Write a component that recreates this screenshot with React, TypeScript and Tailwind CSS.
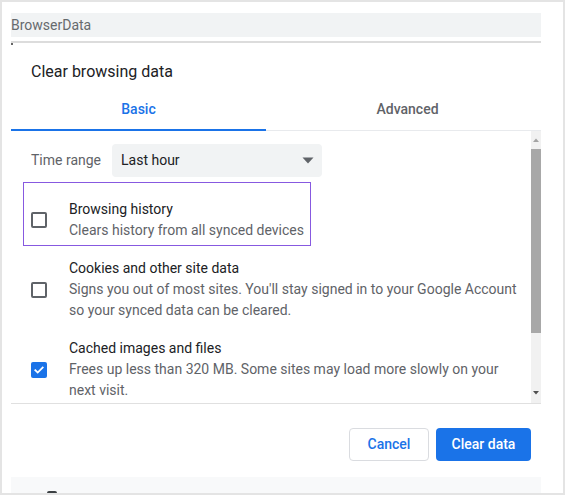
import React from 'react'

const ITEMS = [
  {
    title: 'Cookies and other site data',
    body: "Signs you out of most sites. You'll stay signed in to your Google Account so your synced data can be cleared.",
    checked: false,
    gap: 'mt-[12px]',
  },
  {
    title: 'Cached images and files',
    body: 'Frees up less than 320 MB. Some sites may load more slowly on your next visit.',
    checked: true,
    gap: 'mt-[17px]',
  },
]

function Checkbox({ checked }: { checked: boolean }) {
  if (checked) {
    return (
      <span className="flex h-[16px] w-[16px] shrink-0 items-center justify-center rounded-[2px] bg-[#1a73e8]">
        <svg width="12" height="12" viewBox="0 0 12 12" fill="none">
          <path d="M2.3 6.2l2.4 2.4 5-5" stroke="white" strokeWidth="1.8" strokeLinecap="square" />
        </svg>
      </span>
    )
  }
  return <span className="block h-[16px] w-[16px] shrink-0 rounded-[2px] border-2 border-[#5f6368]" />
}

function Row({ title, body, checked }: { title: string; body: string; checked: boolean }) {
  return (
    <div className="flex items-center gap-[22px]">
      <Checkbox checked={checked} />
      <div className="w-[458px] text-[14px] leading-[21px]">
        <div className="text-[#202124]">{title}</div>
        <div className="text-[#5f6368]">{body}</div>
      </div>
    </div>
  )
}

export default function App() {
  return (
    <div
      className="flex h-[495px] w-[565px] flex-col border-2 border-[#e4e4e4] bg-white pl-[9px] pr-[22px]"
      style={{ fontFamily: 'Roboto, "Liberation Sans", sans-serif' }}
    >
      {/* page header */}
      <div className="mt-[11px] h-[24px] bg-[#f1f3f4] text-[14px] leading-[24px] text-[#666a6e]">
        BrowserData
      </div>
      <div className="mt-[4px] h-[2px] bg-[#dcdcdc]" />
      <div className="h-[2px] w-[2px] bg-[#666]" />

      {/* dialog title */}
      <div className="mt-[15px] pl-[20px] text-[16px] leading-[24px] text-[#202124]">
        Clear browsing data
      </div>

      {/* tabs */}
      <div className="flex h-[47px] border-b border-[#e8eaed]">
        <div className="-mb-px flex w-[255px] items-center justify-center border-b-2 border-[#1a73e8] pt-[5px] text-[14px] font-medium text-[#1a73e8]">
          Basic
        </div>
        <div className="flex flex-1 items-center justify-center pt-[5px] pl-[8px] text-[14px] font-medium text-[#5f6368]">
          Advanced
        </div>
      </div>

      {/* scrolling list */}
      <div className="flex h-[273px] border-b border-[#e0e0e0]">
        <div className="flex-1 overflow-hidden">
          <div className="mt-[13px] flex h-[33px] items-center">
            <span className="w-[101px] pl-[20px] text-[14px] text-[#5f6368]">Time range</span>
            <div className="flex h-[33px] w-[210px] items-center justify-between rounded-[4px] bg-[#f1f3f4] pl-[9px] pr-[8px]">
              <span className="text-[14px] text-[#202124]">Last hour</span>
              <svg width="12" height="7" viewBox="0 0 12 7">
                <path d="M0.5 0.5h11L6 6.5z" fill="#5f6368" />
              </svg>
            </div>
          </div>

          <div className="ml-[12px] mt-[5px] flex h-[64px] w-[288px] border border-[#8759e0] pl-[7px] pt-[16px] pb-[4px]">
            <div className="flex items-center gap-[22px]">
              <Checkbox checked={false} />
              <div className="text-[14px] leading-[21px]">
                <div className="text-[#202124]">Browsing history</div>
                <div className="text-[#5f6368]">Clears history from all synced devices</div>
              </div>
            </div>
          </div>

          {ITEMS.map((item) => (
            <div key={item.title} className={`${item.gap} pl-[20px]`}>
              <Row title={item.title} body={item.body} checked={item.checked} />
            </div>
          ))}
        </div>

        {/* scrollbar */}
        <div className="flex w-[10px] flex-col items-center bg-[#f1f1f1]">
          <svg className="mt-[7px]" width="6" height="4" viewBox="0 0 6 4">
            <path d="M0 4L3 0.5 6 4z" fill="#a3a3a3" />
          </svg>
          <div className="mt-[7px] h-[184px] w-full bg-[#a8a8a8]" />
          <div className="flex-1" />
          <svg className="mb-[8px]" width="6" height="4" viewBox="0 0 6 4">
            <path d="M0 0L3 3.5 6 0z" fill="#505050" />
          </svg>
        </div>
      </div>

      {/* actions */}
      <div className="mt-[24px] flex justify-end gap-[7px] pr-[10px]">
        <button className="h-[33px] w-[80px] rounded-[4px] border border-[#dadce0] bg-white text-[14px] font-medium text-[#1a73e8]">
          Cancel
        </button>
        <button className="h-[33px] w-[95px] rounded-[4px] bg-[#1a73e8] text-[14px] font-medium text-white">
          Clear data
        </button>
      </div>

      {/* next section peeking in */}
      <div className="mt-[16px] flex flex-1 items-end bg-[#f8f9fa] pl-[36px]">
        <div className="h-[2px] w-[10px] rounded-t-full bg-[#3c4043]" />
      </div>
    </div>
  )
}
